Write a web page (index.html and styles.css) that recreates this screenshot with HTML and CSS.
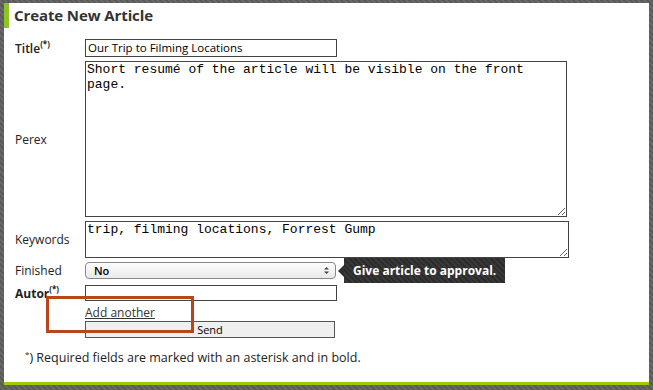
FILE: index.html
```html
<!DOCTYPE html>
<html lang="en">
  <head>
    <meta charset="UTF-8" />
    <title>Create New Article</title>
    <link rel="stylesheet" href="styles.css">
  </head>
  <body>
    <div class="panel">
      <h2 class="panel-title">Create New Article</h2>

      <form class="article-form">
        <label class="semi">Title<sup>(*)</sup></label>
        <div><input type="text" class="text-in" value="Our Trip to Filming Locations" /></div>

        <label>Perex</label>
        <div><textarea class="perex">Short resumé of the article will be visible on the front page.</textarea></div>

        <label>Keywords</label>
        <div><textarea class="keywords">trip, filming locations, Forrest Gump</textarea></div>

        <label>Finished</label>
        <div class="select-row">
          <div class="fake-select">
            <span>No</span>
            <svg width="7" height="9" viewBox="0 0 7 9"><path d="M1 3.5 L3.5 1 L6 3.5Z M1 5.5 L3.5 8 L6 5.5Z" fill="#444"/></svg>
          </div>
          <div class="tooltip">Give article to approval.</div>
        </div>

        <label class="req">Autor<sup>(*)</sup></label>
        <div><input type="text" class="text-in autor" value="" /></div>

        <span></span>
        <div class="add-row"><a href="#">Add another</a></div>

        <span></span>
        <div><button type="button" class="send">Send</button></div>
      </form>

      <p class="note"><sup>*</sup>) Required fields are marked with an asterisk and in bold.</p>

      <div class="highlight"></div>
    </div>
  </body>
</html>
```

FILE: styles.css
```css
* {
  margin: 0;
  padding: 0;
  box-sizing: border-box;
}
body {
  background: repeating-linear-gradient(45deg, #5a5a5a 0 2px, #686868 2px 4px);
  height: 390px;
  overflow: hidden;
  font-family: "Open Sans", "Liberation Sans", sans-serif;
  color: #222;
}
.panel {
  position: relative;
  background: #fff;
  width: 645px;
  height: 382px;
  margin: 3px 0 0 4px;
  border-bottom: 3px solid #9ccc00;
}
.panel-title {
  border-left: 5px solid #8fc31f;
  height: 25px;
  padding: 2px 0 0 5px;
  font-size: 15px;
  font-weight: bold;
  color: #333;
  letter-spacing: -0.1px;
}
.article-form {
  display: grid;
  grid-template-columns: 70px 1fr;
  row-gap: 4px;
  align-items: center;
  padding: 10px 0 0 11px;
  font-size: 12px;
}
.article-form label {
  color: #222;
  font-weight: 500;
}
.article-form label.semi {
  font-weight: 600;
}
.article-form label.req {
  font-weight: bold;
}
.article-form sup {
  font-size: 8px;
  font-weight: bold;
  vertical-align: 6px;
}
.article-form > div {
  display: flex;
  align-items: center;
}
.text-in {
  width: 252px;
  height: 18px;
  border: 1px solid #444;
  padding: 0 2px;
  font-family: inherit;
  font-size: 11.5px;
  color: #000;
}
.text-in.autor {
  height: 16px;
}
textarea {
  border: 1px solid #444;
  font-family: "Liberation Mono", monospace;
  font-size: 13px;
  line-height: 15px;
  padding: 0 1px;
  color: #000;
  resize: both;
}
.perex {
  width: 482px;
  height: 156px;
}
.keywords {
  width: 484px;
  height: 37px;
}
.select-row {
  gap: 6px;
  height: 17px;
}
.fake-select {
  width: 251px;
  height: 17px;
  border: 1px solid #888;
  border-radius: 4px;
  background: linear-gradient(#fdfdfd, #e9e9e9);
  display: flex;
  align-items: center;
  justify-content: space-between;
  padding: 0 5px 0 8px;
  font-size: 11px;
  font-weight: 600;
  color: #000;
}
.tooltip {
  position: relative;
  height: 25px;
  padding: 0 9px;
  margin-left: 2px;
  display: flex;
  align-items: center;
  background: repeating-linear-gradient(45deg, #2c2c2c 0 2px, #383838 2px 4px);
  color: #fff;
  font-weight: bold;
  font-size: 12px;
}
.tooltip::before {
  content: "";
  position: absolute;
  left: -6px;
  top: 7px;
  border-top: 6px solid transparent;
  border-bottom: 6px solid transparent;
  border-right: 6px solid #2f2f2f;
}
.add-row {
  height: 12px;
}
.add-row a {
  color: #333;
  font-size: 12px;
}
.send {
  width: 250px;
  height: 17px;
  margin-top: -1px;
  border: 1px solid #555;
  background: #efefef;
  font-family: inherit;
  font-size: 11px;
  color: #000;
}
.note {
  margin: 10px 0 0 21px;
  font-size: 12.5px;
  color: #222;
}
.note sup {
  font-size: 8px;
}
.highlight {
  position: absolute;
  left: 42px;
  top: 293px;
  width: 148px;
  height: 37px;
  border: 3px solid #b5471b;
}
```
